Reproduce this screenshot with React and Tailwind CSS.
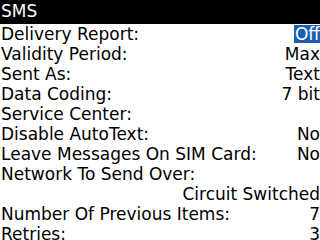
import React from "react";

const rows = [
  { label: "Delivery Report:", value: "Off", selected: true },
  { label: "Validity Period:", value: "Max" },
  { label: "Sent As:", value: "Text" },
  { label: "Data Coding:", value: "7 bit" },
  { label: "Service Center:", value: "" },
  { label: "Disable AutoText:", value: "No" },
  { label: "Leave Messages On SIM Card:", value: "No" },
  { label: "Network To Send Over:", value: null },
  { label: "", value: "Circuit Switched" },
  { label: "Number Of Previous Items:", value: "7" },
  { label: "Retries:", value: "3" },
];

const App = () => {
  return (
    <div
      className="w-[320px] h-[240px] bg-white text-black overflow-hidden text-[17px]"
      style={{ fontFamily: '"DejaVu Sans", sans-serif' }}
    >
      <div className="h-[24px] bg-black text-white pl-[1px] leading-[22px]">SMS</div>
      {rows.map((r, i) => (
        <div key={i} className="h-[20px] leading-[20px] flex justify-between whitespace-nowrap pl-[1px]">
          <span>{r.label}</span>
          {r.value !== null && (
            r.selected ? (
              <span className="bg-[#1b5eb4] text-white leading-[18px] h-[18px] self-center pl-[1px]">{r.value}</span>
            ) : (
              <span>{r.value}</span>
            )
          )}
        </div>
      ))}
    </div>
  );
};

export default App;
